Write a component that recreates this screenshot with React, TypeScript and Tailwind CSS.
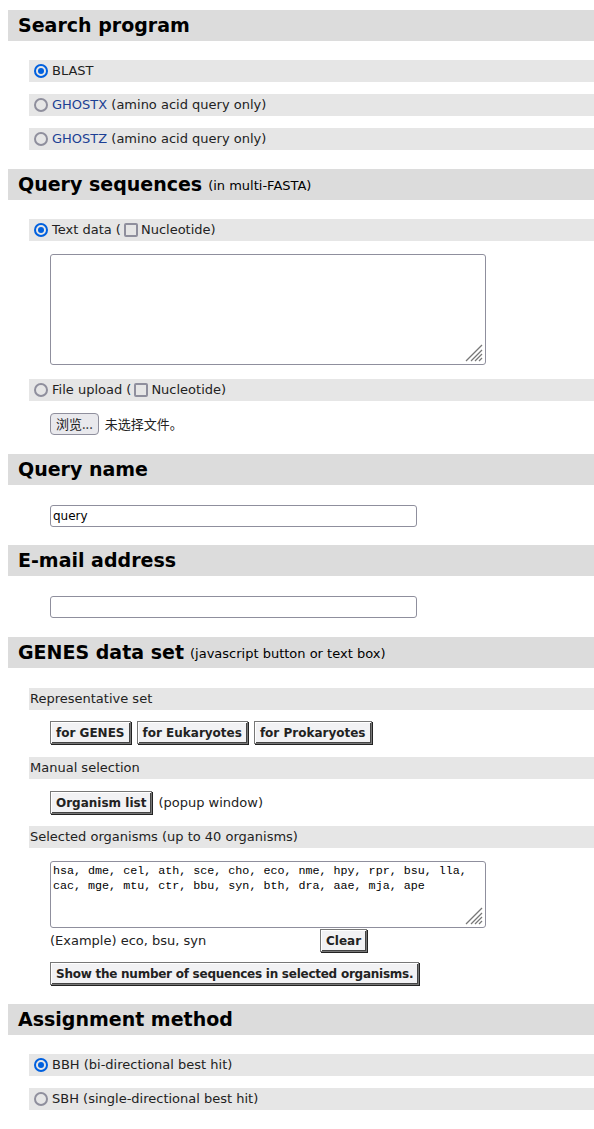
import type { ReactNode } from 'react';

const font = { fontFamily: '"DejaVu Sans", Verdana, sans-serif' };

function Header({ title, note }: { title: string; note?: string }) {
  return (
    <div className="h-[31px] bg-[#dcdcdc] flex items-center pl-[10px] text-black">
      <span className="text-[19px] font-bold">{title}</span>
      {note && <span className="text-[13px] ml-[6px] mt-[3px]">{note}</span>}
    </div>
  );
}

function Radio({ checked }: { checked?: boolean }) {
  return checked ? (
    <span className="w-[14px] h-[14px] rounded-full border-2 border-[#0060df] flex items-center justify-center shrink-0">
      <span className="w-[6px] h-[6px] rounded-full bg-[#0060df]" />
    </span>
  ) : (
    <span className="w-[14px] h-[14px] rounded-full border-2 border-[#8f8f9d] shrink-0" />
  );
}

function Check() {
  return <span className="w-[14px] h-[14px] rounded-[2px] border-2 border-[#8f8f9d] shrink-0 inline-block" />;
}

function Row({ children, className = '' }: { children: ReactNode; className?: string }) {
  return (
    <div className={`ml-[21px] h-[22px] bg-[#e6e6e6] flex items-center text-[13px] text-[#222] ${className}`}>
      {children}
    </div>
  );
}

function OldButton({ children, className = '' }: { children: ReactNode; className?: string }) {
  return (
    <button
      className={`h-[23px] px-[5px] bg-[#f2f2f4] text-[12px] font-bold text-[#222] border border-[#777] shadow-[inset_1px_1px_0_#fff,inset_-1px_-1px_0_#444,1px_1px_0_#222] block ${className}`}
    >
      {children}
    </button>
  );
}

function Grip() {
  return (
    <svg className="absolute right-[3px] bottom-[3px]" width="20" height="20" viewBox="0 0 20 20">
      <g stroke="#777" strokeWidth="1.3">
        <line x1="19" y1="3" x2="3" y2="19" />
        <line x1="19" y1="8" x2="8" y2="19" />
        <line x1="19" y1="12" x2="12" y2="19" />
        <line x1="19" y1="16" x2="16" y2="19" />
      </g>
    </svg>
  );
}

export default function App() {
  return (
    <div className="bg-white w-[594px] min-h-[1129px] pl-[8px] pt-[10px]" style={font}>
      <Header title="Search program" />
      <div className="mt-[19px]">
        <Row className="pl-[5px] gap-[4px]">
          <Radio checked />
          <span>BLAST</span>
        </Row>
        <Row className="pl-[5px] gap-[4px] mt-[12px]">
          <Radio />
          <span>
            <span className="text-[#1c3f94]">GHOSTX</span> (amino acid query only)
          </span>
        </Row>
        <Row className="pl-[5px] gap-[4px] mt-[12px]">
          <Radio />
          <span>
            <span className="text-[#1c3f94]">GHOSTZ</span> (amino acid query only)
          </span>
        </Row>
      </div>

      <div className="mt-[19px]">
        <Header title="Query sequences" note="(in multi-FASTA)" />
      </div>
      <div className="mt-[19px]">
        <Row className="pl-[5px] gap-[4px]">
          <Radio checked />
          <span className="flex items-center gap-[3px]">
            Text data ( <Check />Nucleotide)
          </span>
        </Row>
        <div className="ml-[42px] mt-[13px] relative w-[436px] h-[111px]">
          <textarea className="w-full h-full border border-[#8f8f9d] rounded-[3px] resize-none block" />
          <Grip />
        </div>
        <Row className="pl-[5px] gap-[4px] mt-[14px]">
          <Radio />
          <span className="flex items-center gap-[3px]">
            File upload ( <Check />Nucleotide)
          </span>
        </Row>
        <div className="ml-[42px] mt-[12px] flex items-center gap-[6px] text-[13px] text-[#222]">
          <button
            className="h-[22px] px-[5px] bg-[#e9e9ed] border border-[#8f8f9d] rounded-[4px] text-[13px]"
            style={{ fontFamily: '"Noto Sans CJK SC", "DejaVu Sans", sans-serif' }}
          >
            浏览...
          </button>
          <span style={{ fontFamily: '"Noto Sans CJK SC", sans-serif' }}>未选择文件。</span>
        </div>
      </div>

      <div className="mt-[19px]">
        <Header title="Query name" />
      </div>
      <div className="ml-[42px] mt-[20px]">
        <input
          defaultValue="query"
          className="block w-[367px] h-[22px] border border-[#8f8f9d] rounded-[3px] px-[2px] text-[12px] text-black"
          style={{ fontFamily: '"DejaVu Sans", sans-serif' }}
        />
      </div>

      <div className="mt-[18px]">
        <Header title="E-mail address" />
      </div>
      <div className="ml-[42px] mt-[20px]">
        <input className="block w-[367px] h-[22px] border border-[#8f8f9d] rounded-[3px] px-[2px] text-[12px]" />
      </div>

      <div className="mt-[19px]">
        <Header title="GENES data set" note="(javascript button or text box)" />
      </div>
      <div className="mt-[20px]">
        <Row className="pl-[1px]">Representative set</Row>
        <div className="ml-[42px] mt-[11px] flex gap-[6px]">
          <OldButton>for GENES</OldButton>
          <OldButton>for Eukaryotes</OldButton>
          <OldButton>for Prokaryotes</OldButton>
        </div>
        <Row className="pl-[1px] mt-[13px]">Manual selection</Row>
        <div className="ml-[42px] mt-[12px] flex items-center gap-[6px] text-[13px] text-[#222]">
          <OldButton>Organism list</OldButton>
          <span>(popup window)</span>
        </div>
        <Row className="pl-[1px] mt-[12px]">Selected organisms (up to 40 organisms)</Row>
        <div className="ml-[42px] mt-[13px] relative w-[436px] h-[67px]">
          <textarea
            className="w-full h-full border border-[#8f8f9d] rounded-[3px] resize-none block px-[2px] py-[2px] text-[11.7px] leading-[15px] text-black"
            style={{ fontFamily: '"Liberation Mono", monospace' }}
            defaultValue="hsa, dme, cel, ath, sce, cho, eco, nme, hpy, rpr, bsu, lla, cac, mge, mtu, ctr, bbu, syn, bth, dra, aae, mja, ape"
          />
          <Grip />
        </div>
        <div className="ml-[42px] mt-[1px] flex items-center text-[13px] text-[#222]">
          <span className="w-[270px]">(Example) eco, bsu, syn</span>
          <OldButton>Clear</OldButton>
        </div>
        <div className="ml-[42px] mt-[10px]">
          <OldButton className="tracking-[-0.25px]">Show the number of sequences in selected organisms.</OldButton>
        </div>
      </div>

      <div className="mt-[19px]">
        <Header title="Assignment method" />
      </div>
      <div className="mt-[19px]">
        <Row className="pl-[5px] gap-[4px]">
          <Radio checked />
          <span>BBH (bi-directional best hit)</span>
        </Row>
        <Row className="pl-[5px] gap-[4px] mt-[12px]">
          <Radio />
          <span>SBH (single-directional best hit)</span>
        </Row>
      </div>
    </div>
  );
}
